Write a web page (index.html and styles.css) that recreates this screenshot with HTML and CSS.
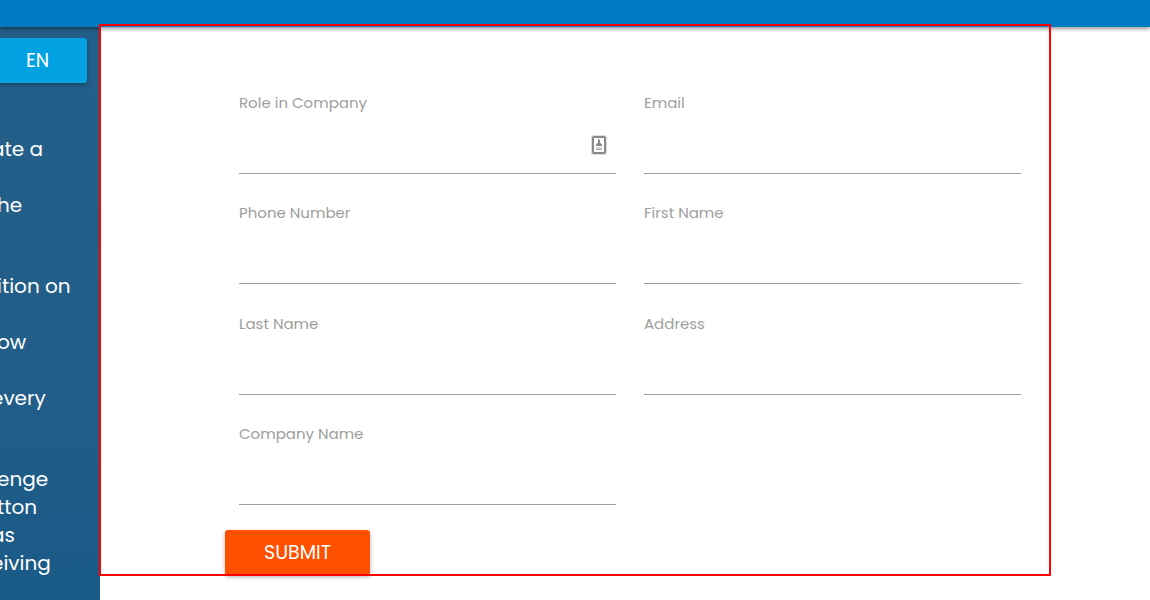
FILE: index.html
```html
<!DOCTYPE html>
<html lang="en">
<head>
<meta charset="utf-8">
<meta name="viewport" content="width=device-width, initial-scale=1">
<title>Contact form</title>
<link rel="stylesheet" href="styles.css">
</head>
<body>
<header class="topbar"></header>
<div class="layout">
  <aside class="sidebar">
    <button class="button button-language" type="button">EN</button>
    <div class="story">
      <p><span class="cut">ate a</span><br><br>he<br><br></p>
      <p>ition on<br><br>ow<br><br><span class="cut">every</span><br><br></p>
      <p>enge<br>tton<br><span class="cut">as</span><br><span class="cut">eiving</span></p>
    </div>
  </aside>
  <main class="content">
    <form class="form">
      <div class="fields">
        <div class="field">
          <label for="role">Role in Company</label>
          <div class="control">
            <input id="role" type="text">
            <svg class="autofill" viewBox="0 0 16 20" aria-hidden="true">
              <rect class="autofill-glow" x="1.5" y="1.5" width="13" height="17" rx="1"/>
              <rect class="autofill-frame" x="2" y="2" width="12" height="16" rx="1"/>
              <path class="autofill-person" d="M7 4.5h2v3l2 2v1.5H5V9.500l2-2z"/>
              <path class="autofill-lines" d="M5 13h6M5 14.500h6"/>
            </svg>
          </div>
        </div>
        <div class="field">
          <label for="email">Email</label>
          <div class="control"><input id="email" type="email"></div>
        </div>
        <div class="field">
          <label for="phone">Phone Number</label>
          <div class="control"><input id="phone" type="tel"></div>
        </div>
        <div class="field">
          <label for="first">First Name</label>
          <div class="control"><input id="first" type="text"></div>
        </div>
        <div class="field">
          <label for="last">Last Name</label>
          <div class="control"><input id="last" type="text"></div>
        </div>
        <div class="field">
          <label for="address">Address</label>
          <div class="control"><input id="address" type="text"></div>
        </div>
        <div class="field">
          <label for="company">Company Name</label>
          <div class="control"><input id="company" type="text"></div>
        </div>
      </div>
      <button class="button button-submit" type="submit">SUBMIT</button>
    </form>
    <div class="highlight"></div>
  </main>
</div>
</body>
</html>
```

FILE: styles.css
```css
* {
  box-sizing: border-box;
}

body {
  margin: 0;
  min-height: 100vh;
  display: flex;
  flex-direction: column;
  background: #fff;
  font-family: Poppins, Inter, "Open Sans", sans-serif;
}

.topbar {
  position: relative;
  z-index: 1;
  height: 27px;
  background: #007ac4;
  box-shadow: 0 2px 4px rgba(0, 0, 0, 0.4);
}

.layout {
  display: flex;
  flex: 1;
}

.sidebar {
  flex: 0 0 100px;
  overflow: hidden;
  padding-top: 11px;
  background: linear-gradient(#245f88, #225e89 60%, #1a5a87);
  color: #fff;
}

.button {
  display: block;
  height: 45px;
  border: 0;
  border-radius: 3px;
  padding: 0;
  color: #fff;
  font: 400 19px/45px Poppins, Inter, "Open Sans", sans-serif;
  text-align: center;
  box-shadow: 0 2px 4px rgba(0, 0, 0, 0.3);
  cursor: pointer;
}

/* The left end of the sidebar runs past the window edge. */
.button-language {
  width: 99px;
  margin-left: -12px;
  background: #02a2e2;
}

.story {
  margin-left: -3px;
  padding-top: 52px;
  font-size: 20px;
  line-height: 28px;
  white-space: nowrap;
}

.story p {
  margin: 0 0 25px;
}

.story p:last-child {
  margin-bottom: 0;
}

/* Lines whose first letter is cut by the window edge. */
.cut {
  margin-left: -6px;
}

.content {
  position: relative;
  flex: 1;
  min-width: 0;
}

.form {
  padding: 64px 115px 24px 125px;
}

.fields {
  display: grid;
  grid-template-columns: 1fr 1fr;
  grid-auto-rows: 1fr;
  column-gap: 28px;
  min-height: 441px;
  padding: 0 14px;
}

.field label {
  display: block;
  color: #9e9e9e;
  font-size: 15px;
  line-height: 24px;
}

.control {
  display: flex;
  align-items: center;
  height: 59px;
  border-bottom: 1px solid #9e9e9e;
}

.control input {
  flex: 1;
  min-width: 0;
  height: 100%;
  border: 0;
  padding: 0;
  background: transparent;
  font: inherit;
  outline: 0;
}

.autofill {
  width: 16px;
  height: 20px;
  margin-top: 2px;
  margin-right: 9px;
}

.autofill-glow {
  fill: none;
  stroke: #dcdcdc;
  stroke-width: 3;
}

.autofill-frame {
  fill: #fff;
  stroke: #8a8a8a;
  stroke-width: 2;
}

.autofill-person {
  fill: #8a8a8a;
}

.autofill-lines {
  stroke: #a8a8a8;
}

.button-submit {
  width: 145px;
  margin-top: -2px;
  background: #ff5000;
}

.highlight {
  position: absolute;
  z-index: 2;
  top: -3px;
  right: 99px;
  left: -1px;
  height: 552px;
  border: 2px solid #f00;
  pointer-events: none;
}
```
